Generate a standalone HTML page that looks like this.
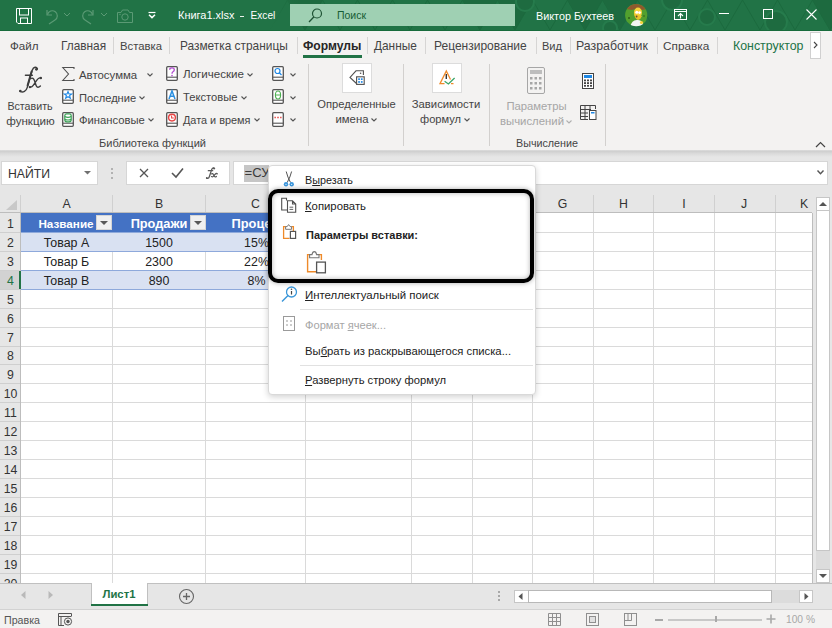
<!DOCTYPE html><html><head><meta charset="utf-8"><style>
html,body{margin:0;padding:0;}
body{width:832px;height:628px;overflow:hidden;position:relative;background:#fff;font-family:"Liberation Sans", sans-serif;}
.t{position:absolute;white-space:nowrap;}
svg{overflow:visible;}
</style></head><body><div style="position:absolute;left:0px;top:0px;width:832px;height:31px;background:#217346;"></div><div style="position:absolute;left:0px;top:30px;width:832px;height:1px;background:#176b3c;"></div><div style="position:absolute;left:0;top:0;width:832px;height:30px;overflow:hidden"><svg style="position:absolute;left:0px;top:0px;" width="832" height="30" viewBox="0 0 832 30"><path d="M270.0 30 L287.5 0 L305.0 30" fill="none" stroke="#1c6a3e" stroke-width="1"/><path d="M287.5 0 L305.0 30 L322.5 0 Z" fill="#1d6a3f"/><path d="M305.0 30 L322.5 0 L340.0 30" fill="none" stroke="#1c6a3e" stroke-width="1"/><path d="M340.0 30 L357.5 0 L375.0 30" fill="none" stroke="#1c6a3e" stroke-width="1"/><path d="M375.0 30 L392.5 0 L410.0 30" fill="none" stroke="#1c6a3e" stroke-width="1"/><path d="M410.0 30 L427.5 0 L445.0 30" fill="none" stroke="#1c6a3e" stroke-width="1"/><path d="M445.0 30 L462.5 0 L480.0 30" fill="none" stroke="#1c6a3e" stroke-width="1"/><path d="M462.5 0 L480.0 30 L497.5 0 Z" fill="#1d6a3f"/><path d="M480.0 30 L497.5 0 L515.0 30" fill="none" stroke="#1c6a3e" stroke-width="1"/><path d="M497.5 0 L515.0 30 L532.5 0 Z" fill="#1d6a3f"/><path d="M515.0 30 L532.5 0 L550.0 30" fill="none" stroke="#1c6a3e" stroke-width="1"/><path d="M550.0 30 L567.5 0 L585.0 30" fill="none" stroke="#1c6a3e" stroke-width="1"/><path d="M567.5 0 L585.0 30 L602.5 0 Z" fill="#1d6a3f"/><path d="M585.0 30 L602.5 0 L620.0 30" fill="none" stroke="#1c6a3e" stroke-width="1"/><path d="M602.5 0 L620.0 30 L637.5 0 Z" fill="#1d6a3f"/><path d="M620.0 30 L637.5 0 L655.0 30" fill="none" stroke="#1c6a3e" stroke-width="1"/><path d="M655.0 30 L672.5 0 L690.0 30" fill="none" stroke="#1c6a3e" stroke-width="1"/><path d="M690.0 30 L707.5 0 L725.0 30" fill="none" stroke="#1c6a3e" stroke-width="1"/><path d="M725.0 30 L742.5 0 L760.0 30" fill="none" stroke="#1c6a3e" stroke-width="1"/><path d="M760.0 30 L777.5 0 L795.0 30" fill="none" stroke="#1c6a3e" stroke-width="1"/><path d="M795.0 30 L812.5 0 L830.0 30" fill="none" stroke="#1c6a3e" stroke-width="1"/><path d="M812.5 0 L830.0 30 L847.5 0 Z" fill="#1d6a3f"/><path d="M830.0 30 L847.5 0 L865.0 30" fill="none" stroke="#1c6a3e" stroke-width="1"/><path d="M865.0 30 L882.5 0 L900.0 30" fill="none" stroke="#1c6a3e" stroke-width="1"/><circle cx="525" cy="2" r="9" fill="#1e6b40" stroke="#267b4c" stroke-width="2"/><circle cx="672" cy="0" r="10" fill="#1e6b40" stroke="#267b4c" stroke-width="2"/><circle cx="707" cy="17" r="8" fill="#1e6b40" stroke="#267b4c" stroke-width="2"/><circle cx="776" cy="22" r="11" fill="#1e6b40" stroke="#267b4c" stroke-width="2"/><circle cx="610" cy="28" r="7" fill="#1e6b40" stroke="#267b4c" stroke-width="2"/></svg></div><div style="position:absolute;left:0px;top:0px;width:300px;height:30px;background:linear-gradient(90deg,#217346 90%,rgba(33,115,70,0));"></div><svg style="position:absolute;left:16px;top:8px;" width="16" height="16" viewBox="0 0 16 16"><path d="M0.5 0.5 H15.5 V15.5 H2 L0.5 14 Z" fill="none" stroke="#fff" stroke-width="1"/><rect x="3.5" y="0.5" width="9" height="6.5" fill="none" stroke="#fff"/><rect x="4.5" y="10" width="7" height="5.5" fill="none" stroke="#fff"/></svg><svg style="position:absolute;left:44px;top:8px;" width="15" height="16" viewBox="0 0 15 16"><path d="M3 2 V7 H8" fill="none" stroke="#5b9a75" stroke-width="1.2"/><path d="M3.5 6.5 A5 5 0 1 1 11 12 L5 16" fill="none" stroke="#5b9a75" stroke-width="1.2"/></svg><svg style="position:absolute;left:63px;top:12px;" width="8" height="5" viewBox="0 0 8 5"><path d="M1 1 L4 4 L7 1" fill="none" stroke="#5b9a75" stroke-width="1"/></svg><svg style="position:absolute;left:81px;top:8px;" width="15" height="16" viewBox="0 0 15 16"><path d="M12 2 V7 H7" fill="none" stroke="#5b9a75" stroke-width="1.2"/><path d="M11.5 6.5 A5 5 0 1 0 4 12 L10 16" fill="none" stroke="#5b9a75" stroke-width="1.2"/></svg><svg style="position:absolute;left:100px;top:12px;" width="8" height="5" viewBox="0 0 8 5"><path d="M1 1 L4 4 L7 1" fill="none" stroke="#5b9a75" stroke-width="1"/></svg><svg style="position:absolute;left:117px;top:9px;" width="16" height="14" viewBox="0 0 16 14"><path d="M0.5 3.5 H4 L5.5 1 H11 L12.5 3.5 H15.5 V13.5 H0.5 Z" fill="none" stroke="#5b9a75" stroke-width="1"/><circle cx="8" cy="8" r="3.2" fill="none" stroke="#5b9a75"/><circle cx="3" cy="5.5" r="0.7" fill="#5b9a75"/></svg><svg style="position:absolute;left:147px;top:11px;" width="10" height="9" viewBox="0 0 10 9"><path d="M1.5 1.5 H8.5" stroke="#fff" stroke-width="1.2"/><path d="M2 3.8 L5 6.6 L8 3.8" fill="none" stroke="#fff" stroke-width="1.5"/></svg><div class="t" style="left:178px;top:7.50px;height:14px;line-height:14px;font-size:10.98px;color:#fff;font-weight:400;font-style:normal;">Книга1.xlsx</div><div style="position:absolute;left:239.5px;top:15.5px;width:4px;height:1px;background:#e8f0ea;"></div><div class="t" style="left:250.5px;top:8.80px;height:13px;line-height:13px;font-size:10.14px;color:#fff;font-weight:400;font-style:normal;">Excel</div><div style="position:absolute;left:290px;top:4px;width:225px;height:22px;background:#9fd0b3;"></div><svg style="position:absolute;left:308px;top:8px;" width="15" height="15" viewBox="0 0 15 15"><circle cx="9" cy="5.5" r="4.5" fill="none" stroke="#1e5234" stroke-width="1.2"/><path d="M6 8.8 L1 14" stroke="#1e5234" stroke-width="1.3"/></svg><div class="t" style="left:337px;top:8.50px;height:14px;line-height:14px;font-size:10.47px;color:#165c33;font-weight:400;font-style:normal;">Поиск</div><div class="t" style="left:536px;top:8.50px;height:14px;line-height:14px;font-size:10.80px;color:#fff;font-weight:400;font-style:normal;">Виктор Бухтеев</div><svg style="position:absolute;left:625px;top:4px;" width="23" height="23" viewBox="0 0 23 23"><defs><clipPath id="av"><circle cx="11.2" cy="11.2" r="11.1"/></clipPath></defs><g clip-path="url(#av)"><rect width="23" height="23" fill="#52a02e"/><circle cx="4" cy="14" r="1" fill="#2e5e1a"/><circle cx="19" cy="12" r="0.8" fill="#2e5e1a"/><path d="M1 5 Q6 -1 12 0 Q19 0 22 5 L17 6 Q12 3 7 6 Z" fill="#8f5a2e"/><ellipse cx="13" cy="8.6" rx="4" ry="5" fill="#f6d23a"/><path d="M9 10 Q10 15 13 16 Q16 15 17 12 Z" fill="#e9c12e"/><circle cx="11.8" cy="8.2" r="1.5" fill="#fff"/><circle cx="14.6" cy="8.6" r="1.4" fill="#fff"/><circle cx="11.6" cy="12.5" r="0.9" fill="#6b4a2a"/><path d="M5 23 Q7 15 13 16 Q18 16 19 23 Z" fill="#f4f4f4"/><circle cx="16.5" cy="18.5" r="1.6" fill="#f6d23a"/></g></svg><svg style="position:absolute;left:674px;top:9px;" width="13" height="11" viewBox="0 0 13 11"><rect x="0.5" y="0.5" width="12" height="10" fill="none" stroke="#fff"/><path d="M1 2.5 H12" stroke="#fff"/><path d="M6.5 9.5 V4.5 M4 7 L6.5 4.5 L9 7" fill="none" stroke="#fff" stroke-width="1.1"/></svg><div style="position:absolute;left:719px;top:13px;width:10px;height:1px;background:#fff;"></div><svg style="position:absolute;left:763px;top:9px;" width="10" height="10" viewBox="0 0 10 10"><rect x="0.5" y="0.5" width="9" height="9" fill="none" stroke="#fff"/></svg><svg style="position:absolute;left:806px;top:9px;" width="11" height="11" viewBox="0 0 11 11"><path d="M0.5 0.5 L10.5 10.5 M10.5 0.5 L0.5 10.5" stroke="#fff" stroke-width="1.1"/></svg><div style="position:absolute;left:0px;top:31px;width:832px;height:119px;background:#f3f2f1;"></div><div class="t" style="left:10px;top:37.50px;height:15px;line-height:15px;font-size:11.63px;color:#444;font-weight:400;font-style:normal;">Файл</div><div class="t" style="left:61px;top:38.50px;height:15px;line-height:15px;font-size:11.85px;color:#444;font-weight:400;font-style:normal;">Главная</div><div class="t" style="left:120px;top:38.50px;height:15px;line-height:15px;font-size:11.30px;color:#444;font-weight:400;font-style:normal;">Вставка</div><div class="t" style="left:180px;top:38.50px;height:15px;line-height:15px;font-size:11.88px;color:#444;font-weight:400;font-style:normal;">Разметка страницы</div><div class="t" style="left:303px;top:38.00px;height:16px;line-height:16px;font-size:12.12px;color:#262626;font-weight:700;font-style:normal;">Формулы</div><div class="t" style="left:374px;top:38.50px;height:15px;line-height:15px;font-size:11.85px;color:#444;font-weight:400;font-style:normal;">Данные</div><div class="t" style="left:434px;top:38.00px;height:16px;line-height:16px;font-size:12.00px;color:#444;font-weight:400;font-style:normal;">Рецензирование</div><div class="t" style="left:542px;top:39.00px;height:14px;line-height:14px;font-size:11.06px;color:#444;font-weight:400;font-style:normal;">Вид</div><div class="t" style="left:576px;top:38.00px;height:16px;line-height:16px;font-size:12.33px;color:#444;font-weight:400;font-style:normal;">Разработчик</div><div class="t" style="left:663px;top:38.50px;height:15px;line-height:15px;font-size:11.80px;color:#444;font-weight:400;font-style:normal;">Справка</div><div class="t" style="left:733px;top:38.00px;height:16px;line-height:16px;font-size:12.37px;color:#217346;font-weight:400;font-style:normal;">Конструктор</div><div style="position:absolute;left:113px;top:37px;width:1px;height:17px;background:#d6d5d4;"></div><div style="position:absolute;left:169px;top:37px;width:1px;height:17px;background:#d6d5d4;"></div><div style="position:absolute;left:297px;top:37px;width:1px;height:17px;background:#d6d5d4;"></div><div style="position:absolute;left:367px;top:37px;width:1px;height:17px;background:#d6d5d4;"></div><div style="position:absolute;left:425px;top:37px;width:1px;height:17px;background:#d6d5d4;"></div><div style="position:absolute;left:536px;top:37px;width:1px;height:17px;background:#d6d5d4;"></div><div style="position:absolute;left:570px;top:37px;width:1px;height:17px;background:#d6d5d4;"></div><div style="position:absolute;left:657px;top:37px;width:1px;height:17px;background:#d6d5d4;"></div><div style="position:absolute;left:717px;top:37px;width:1px;height:17px;background:#d6d5d4;"></div><div style="position:absolute;left:303px;top:55px;width:59px;height:3px;background:#217346;"></div><div style="position:absolute;left:810px;top:32px;width:11px;height:27px;background:#fff;border:1px solid #d0d0d0;box-sizing:border-box;"></div><svg style="position:absolute;left:812px;top:41px;" width="7" height="8" viewBox="0 0 7 8"><path d="M2 1 L5 4 L2 7" fill="none" stroke="#444" stroke-width="1.1"/></svg><svg style="position:absolute;left:0;top:0;" width="832" height="628" viewBox="0 0 832 628"><path d="M37.4 68.8 C36.6 66.6 33.6 66.4 32.2 70.2 L27.2 87.6 C26.2 91.2 23 92.6 20.6 91.6 M25.4 75.2 H32.4 M30.6 78.6 C32.4 77.4 33.8 78.6 34.6 81 L36.1 85.4 C36.8 87.6 38.6 87.8 40.4 86 M41 78.2 C39.4 77.2 37.8 78.6 35.8 81.6 L33.2 85.4 C32.2 86.8 31 87.4 30 86.9" fill="none" stroke="#3c3c3c" stroke-width="1.4" stroke-linecap="round" vector-effect="non-scaling-stroke"/><circle cx="36.4" cy="69.3" r="1.35" fill="#3c3c3c"/><circle cx="20.3" cy="91" r="1.35" fill="#3c3c3c"/><circle cx="40.8" cy="78" r="1.2" fill="#3c3c3c"/><circle cx="29.9" cy="87.1" r="1.2" fill="#3c3c3c"/><path d="M31.6 71.5 L27.6 85.5" stroke="#3c3c3c" stroke-width="2" stroke-linecap="round"/></svg><div class="t" style="left:-120px;width:300px;text-align:center;top:99.00px;height:14px;line-height:14px;font-size:10.67px;color:#444;font-weight:400;font-style:normal;">Вставить</div><div class="t" style="left:-119.5px;width:300px;text-align:center;top:113.00px;height:15px;line-height:15px;font-size:11.62px;color:#444;font-weight:400;font-style:normal;">функцию</div><svg style="position:absolute;left:62px;top:67px;" width="13" height="14" viewBox="0 0 13 14"><path d="M12 2 V0.5 H0.8 L6.5 7 L0.8 13.5 H12 V12" fill="none" stroke="#505050" stroke-width="1.1"/></svg><div class="t" style="left:79px;top:67.50px;height:15px;line-height:15px;font-size:11.42px;color:#444;font-weight:400;font-style:normal;">Автосумма</div><svg style="position:absolute;left:147px;top:73px;" width="6" height="4" viewBox="0 0 6 4"><path d="M0.5 0.5 L3 3 L5.5 0.5" fill="none" stroke="#555" stroke-width="1.1"/></svg><svg style="position:absolute;left:62px;top:89px;" width="12" height="15" viewBox="0 0 12 15"><rect x="0.7" y="0.7" width="10.6" height="13.6" rx="1" fill="#fff" stroke="#555" stroke-width="1.3"/><path d="M0.7 11.2 H11.3" stroke="#555" stroke-width="1.1"/><path d="M6 2.5 L7 5 H9.7 L7.6 6.6 L8.4 9.3 L6 7.7 L3.6 9.3 L4.4 6.6 L2.3 5 H5 Z" fill="none" stroke="#1e88e5" stroke-width="1.1"/></svg><div class="t" style="left:79px;top:90.50px;height:14px;line-height:14px;font-size:11.12px;color:#444;font-weight:400;font-style:normal;">Последние</div><svg style="position:absolute;left:139px;top:95.5px;" width="6" height="4" viewBox="0 0 6 4"><path d="M0.5 0.5 L3 3 L5.5 0.5" fill="none" stroke="#555" stroke-width="1.1"/></svg><svg style="position:absolute;left:62px;top:112px;" width="12" height="15" viewBox="0 0 12 15"><rect x="0.7" y="0.7" width="10.6" height="13.6" rx="1" fill="#fff" stroke="#555" stroke-width="1.3"/><path d="M0.7 11.2 H11.3" stroke="#555" stroke-width="1.1"/><rect x="2.8" y="1.8" width="6.4" height="8" rx="2" fill="none" stroke="#3aa055" stroke-width="1.2"/><path d="M2.8 4.6 Q6 6.2 9.2 4.6 M2.8 7.2 Q6 8.8 9.2 7.2" fill="none" stroke="#3aa055" stroke-width="1.1"/></svg><div class="t" style="left:79px;top:112.50px;height:15px;line-height:15px;font-size:11.24px;color:#444;font-weight:400;font-style:normal;">Финансовые</div><svg style="position:absolute;left:148px;top:118px;" width="6" height="4" viewBox="0 0 6 4"><path d="M0.5 0.5 L3 3 L5.5 0.5" fill="none" stroke="#555" stroke-width="1.1"/></svg><svg style="position:absolute;left:166px;top:66px;" width="12" height="15" viewBox="0 0 12 15"><rect x="0.7" y="0.7" width="10.6" height="13.6" rx="1" fill="#fff" stroke="#555" stroke-width="1.3"/><path d="M0.7 11.2 H11.3" stroke="#555" stroke-width="1.1"/><path d="M3.7 3.8 Q3.7 1.8 6 1.8 Q8.3 1.8 8.3 3.8 Q8.3 5 7 5.8 Q6 6.5 6 7.8" fill="none" stroke="#b04ad0" stroke-width="1.3"/><circle cx="6" cy="9.6" r="0.8" fill="#b04ad0"/></svg><div class="t" style="left:183px;top:67.00px;height:15px;line-height:15px;font-size:11.59px;color:#444;font-weight:400;font-style:normal;">Логические</div><svg style="position:absolute;left:247px;top:73px;" width="6" height="4" viewBox="0 0 6 4"><path d="M0.5 0.5 L3 3 L5.5 0.5" fill="none" stroke="#555" stroke-width="1.1"/></svg><svg style="position:absolute;left:166px;top:89px;" width="12" height="15" viewBox="0 0 12 15"><rect x="0.7" y="0.7" width="10.6" height="13.6" rx="1" fill="#fff" stroke="#555" stroke-width="1.3"/><path d="M0.7 11.2 H11.3" stroke="#555" stroke-width="1.1"/><path d="M3 10 L6 2 L9 10 M4.1 7.3 H7.9" fill="none" stroke="#2b8fe0" stroke-width="1.5"/></svg><div class="t" style="left:183px;top:90.00px;height:15px;line-height:15px;font-size:11.19px;color:#444;font-weight:400;font-style:normal;">Текстовые</div><svg style="position:absolute;left:240.5px;top:95.5px;" width="6" height="4" viewBox="0 0 6 4"><path d="M0.5 0.5 L3 3 L5.5 0.5" fill="none" stroke="#555" stroke-width="1.1"/></svg><svg style="position:absolute;left:166px;top:112px;" width="12" height="15" viewBox="0 0 12 15"><rect x="0.7" y="0.7" width="10.6" height="13.6" rx="1" fill="#fff" stroke="#555" stroke-width="1.3"/><path d="M0.7 11.2 H11.3" stroke="#555" stroke-width="1.1"/><circle cx="6" cy="5.6" r="3.4" fill="none" stroke="#e84545" stroke-width="1.4"/><path d="M5.6 3.6 V6 H7.8" fill="none" stroke="#e84545" stroke-width="1.1"/></svg><div class="t" style="left:183px;top:113.00px;height:14px;line-height:14px;font-size:10.87px;color:#444;font-weight:400;font-style:normal;">Дата и время</div><svg style="position:absolute;left:253.5px;top:118px;" width="6" height="4" viewBox="0 0 6 4"><path d="M0.5 0.5 L3 3 L5.5 0.5" fill="none" stroke="#555" stroke-width="1.1"/></svg><svg style="position:absolute;left:272px;top:66px;" width="12" height="15" viewBox="0 0 12 15"><rect x="0.7" y="0.7" width="10.6" height="13.6" rx="1" fill="#fff" stroke="#555" stroke-width="1.3"/><path d="M0.7 11.2 H11.3" stroke="#555" stroke-width="1.1"/><circle cx="5.5" cy="5" r="2.5" fill="none" stroke="#1e88e5" stroke-width="1.2"/><path d="M7.3 6.8 L9.5 9" stroke="#1e88e5" stroke-width="1.3"/></svg><svg style="position:absolute;left:289.5px;top:73px;" width="6" height="4" viewBox="0 0 6 4"><path d="M0.5 0.5 L3 3 L5.5 0.5" fill="none" stroke="#555" stroke-width="1.1"/></svg><svg style="position:absolute;left:272px;top:89px;" width="12" height="15" viewBox="0 0 12 15"><rect x="0.7" y="0.7" width="10.6" height="13.6" rx="1" fill="#fff" stroke="#555" stroke-width="1.3"/><path d="M0.7 11.2 H11.3" stroke="#555" stroke-width="1.1"/><ellipse cx="6" cy="6" rx="2.6" ry="4" fill="none" stroke="#4caf50" stroke-width="1.1"/><path d="M3.4 6 H8.6" stroke="#4caf50" stroke-width="1"/></svg><svg style="position:absolute;left:289.5px;top:95.5px;" width="6" height="4" viewBox="0 0 6 4"><path d="M0.5 0.5 L3 3 L5.5 0.5" fill="none" stroke="#555" stroke-width="1.1"/></svg><svg style="position:absolute;left:272px;top:112px;" width="12" height="15" viewBox="0 0 12 15"><rect x="0.7" y="0.7" width="10.6" height="13.6" rx="1" fill="#fff" stroke="#555" stroke-width="1.3"/><path d="M0.7 11.2 H11.3" stroke="#555" stroke-width="1.1"/><path d="M2.5 5.5 H3.8 M5.3 5.5 H6.7 M8.2 5.5 H9.5" stroke="#e53935" stroke-width="1.3"/></svg><svg style="position:absolute;left:289.5px;top:118px;" width="6" height="4" viewBox="0 0 6 4"><path d="M0.5 0.5 L3 3 L5.5 0.5" fill="none" stroke="#555" stroke-width="1.1"/></svg><div class="t" style="left:2.5px;width:300px;text-align:center;top:135.60px;height:14px;line-height:14px;font-size:11.03px;color:#444;font-weight:400;font-style:normal;">Библиотека функций</div><div style="position:absolute;left:308px;top:64px;width:1px;height:82px;background:#d2d0ce;"></div><div style="position:absolute;left:342px;top:63px;width:30px;height:30px;background:#fff;border:1px solid #dcdcdc;box-sizing:border-box;"></div><svg style="position:absolute;left:0;top:0;" width="832" height="628" viewBox="0 0 832 628"><path d="M357 84 L350 77.4 L356 70.8 H363.4 V75" fill="none" stroke="#505050" stroke-width="1.1"/><circle cx="360.6" cy="73.3" r="0.8" fill="#505050"/><rect x="356.6" y="76.8" width="7.6" height="7.6" fill="#fff" stroke="#505050" stroke-width="1.1"/><rect x="358.2" y="78.3" width="1.7" height="1.7" fill="#1e88e5"/><rect x="360.9" y="78.3" width="1.7" height="1.7" fill="#1e88e5"/><rect x="358.2" y="81.1" width="1.7" height="1.7" fill="#1e88e5"/><rect x="360.9" y="81.1" width="1.7" height="1.7" fill="#1e88e5"/></svg><div class="t" style="left:206.5px;width:300px;text-align:center;top:97.00px;height:14px;line-height:14px;font-size:11.15px;color:#444;font-weight:400;font-style:normal;">Определенные</div><div class="t" style="left:202px;width:300px;text-align:center;top:111.80px;height:15px;line-height:15px;font-size:11.34px;color:#444;font-weight:400;font-style:normal;">имена</div><svg style="position:absolute;left:371px;top:117.5px;" width="6" height="4" viewBox="0 0 6 4"><path d="M0.5 0.5 L3 3 L5.5 0.5" fill="none" stroke="#555" stroke-width="1.1"/></svg><div style="position:absolute;left:403px;top:64px;width:1px;height:82px;background:#d2d0ce;"></div><div style="position:absolute;left:432px;top:63px;width:30px;height:30px;background:#fff;border:1px solid #dcdcdc;box-sizing:border-box;"></div><svg style="position:absolute;left:0;top:0;" width="832" height="628" viewBox="0 0 832 628"><path d="M444.5 83.6 H440 L446.3 71 L450.5 79.5" fill="none" stroke="#ee8a2a" stroke-width="1.3"/><path d="M446.3 74 V79" stroke="#333" stroke-width="1.4"/><path d="M444.6 81.3 L448.4 84 L454.6 78" fill="none" stroke="#3aa569" stroke-width="1.3"/><path d="M451 83.6 H453.5" stroke="#ee8a2a" stroke-width="1.3"/></svg><div class="t" style="left:296px;width:300px;text-align:center;top:96.50px;height:15px;line-height:15px;font-size:11.29px;color:#444;font-weight:400;font-style:normal;">Зависимости</div><div class="t" style="left:290.5px;width:300px;text-align:center;top:112.30px;height:14px;line-height:14px;font-size:11.10px;color:#444;font-weight:400;font-style:normal;">формул</div><svg style="position:absolute;left:463.5px;top:117.5px;" width="6" height="4" viewBox="0 0 6 4"><path d="M0.5 0.5 L3 3 L5.5 0.5" fill="none" stroke="#555" stroke-width="1.1"/></svg><div style="position:absolute;left:489px;top:64px;width:1px;height:82px;background:#d2d0ce;"></div><svg style="position:absolute;left:527px;top:67px;" width="19" height="27" viewBox="0 0 19 27"><rect x="0.5" y="0.5" width="17" height="26" rx="1.5" fill="none" stroke="#a6a6a6" stroke-width="1"/><rect x="3" y="3" width="12" height="4" fill="#bdbdbd"/><rect x="3.0" y="10" width="2.5" height="2.5" fill="#a6a6a6"/><rect x="3.0" y="15" width="2.5" height="2.5" fill="#a6a6a6"/><rect x="3.0" y="20" width="2.5" height="2.5" fill="#a6a6a6"/><rect x="7.5" y="10" width="2.5" height="2.5" fill="#a6a6a6"/><rect x="7.5" y="15" width="2.5" height="2.5" fill="#a6a6a6"/><rect x="7.5" y="20" width="2.5" height="2.5" fill="#a6a6a6"/><rect x="12.0" y="10" width="2.5" height="2.5" fill="#a6a6a6"/><rect x="12.0" y="15" width="2.5" height="2.5" fill="#a6a6a6"/><rect x="12.0" y="20" width="2.5" height="2.5" fill="#a6a6a6"/></svg><div class="t" style="left:386.5px;width:300px;text-align:center;top:98.50px;height:15px;line-height:15px;font-size:11.28px;color:#a6a6a6;font-weight:400;font-style:normal;">Параметры</div><div class="t" style="left:382px;width:300px;text-align:center;top:113.50px;height:15px;line-height:15px;font-size:11.35px;color:#a6a6a6;font-weight:400;font-style:normal;">вычислений</div><svg style="position:absolute;left:566px;top:119.5px;" width="6" height="4" viewBox="0 0 6 4"><path d="M0.5 0.5 L3 3 L5.5 0.5" fill="none" stroke="#b0b0b0" stroke-width="1.1"/></svg><svg style="position:absolute;left:582px;top:73px;" width="12" height="16" viewBox="0 0 12 16"><rect x="0.5" y="0.5" width="11" height="15" fill="#fff" stroke="#444"/><rect x="2" y="2" width="8" height="3" fill="#1e88e5"/><rect x="2" y="6.5" width="2" height="1.8" fill="#444"/><rect x="2" y="9.2" width="2" height="1.8" fill="#444"/><rect x="2" y="11.9" width="2" height="1.8" fill="#444"/><rect x="5" y="6.5" width="2" height="1.8" fill="#444"/><rect x="5" y="9.2" width="2" height="1.8" fill="#444"/><rect x="5" y="11.9" width="2" height="1.8" fill="#444"/><rect x="8" y="6.5" width="2" height="1.8" fill="#444"/><rect x="8" y="9.2" width="2" height="1.8" fill="#444"/><rect x="8" y="11.9" width="2" height="1.8" fill="#444"/></svg><svg style="position:absolute;left:580px;top:105px;" width="17" height="15" viewBox="0 0 17 15"><path d="M0.5 0.5 H15.5 V4 M0.5 0.5 V14.5 H8 M0.5 4.5 H11 M0.5 8 H8 M0.5 11.5 H8 M5 0.5 V14.5 M10 0.5 V4.5" fill="none" stroke="#444" stroke-width="1"/><rect x="9.5" y="5.5" width="6.5" height="9" fill="#fff" stroke="#444"/><rect x="11" y="7" width="3.5" height="1.5" fill="#1e88e5"/></svg><div class="t" style="left:397px;width:300px;text-align:center;top:135.60px;height:14px;line-height:14px;font-size:10.74px;color:#444;font-weight:400;font-style:normal;">Вычисление</div><div style="position:absolute;left:605px;top:64px;width:1px;height:82px;background:#d2d0ce;"></div><svg style="position:absolute;left:815px;top:141px;" width="11" height="7" viewBox="0 0 11 7"><path d="M1 6 L5.5 1.5 L10 6" fill="none" stroke="#444" stroke-width="1.2"/></svg><div style="position:absolute;left:0px;top:150px;width:832px;height:7px;background:linear-gradient(#dcdcdc 0%,#d0d0d0 22%,#dadada 50%,#e6e6e6 100%);"></div><div style="position:absolute;left:0px;top:157px;width:832px;height:56px;background:#e6e6e6;"></div><div style="position:absolute;left:1px;top:161px;width:97px;height:24px;background:#fff;border:1px solid #d6d6d6;box-sizing:border-box;"></div><div class="t" style="left:8px;top:165.80px;height:16px;line-height:16px;font-size:12.22px;color:#333;font-weight:400;font-style:normal;">НАЙТИ</div><svg style="position:absolute;left:84px;top:170.5px;" width="7" height="4" viewBox="0 0 7 4"><path d="M0 0 H7 L3.5 3.5 Z" fill="#707070"/></svg><div style="position:absolute;left:111px;top:168px;width:2px;height:2px;background:#a0a0a0;border-radius:1px;"></div><div style="position:absolute;left:111px;top:172.3px;width:2px;height:2px;background:#a0a0a0;border-radius:1px;"></div><div style="position:absolute;left:111px;top:176.6px;width:2px;height:2px;background:#a0a0a0;border-radius:1px;"></div><div style="position:absolute;left:126px;top:161px;width:104px;height:24px;background:#fff;border:1px solid #d6d6d6;box-sizing:border-box;"></div><svg style="position:absolute;left:139px;top:168px;" width="10" height="10" viewBox="0 0 10 10"><path d="M1 1 L9 9 M9 1 L1 9" stroke="#555" stroke-width="1.3"/></svg><svg style="position:absolute;left:171px;top:167px;" width="13" height="11" viewBox="0 0 13 11"><path d="M1 6 L5 10 L12 1.5" fill="none" stroke="#555" stroke-width="1.6"/></svg><svg style="position:absolute;left:0;top:0;" width="832" height="628" viewBox="0 0 832 628"><path d="M214.6 168.6 C214 167.4 212.4 167.4 211.7 169.5 L209.3 176.8 C208.8 178.3 207.6 178.8 206.7 178.2 M208.3 170.7 H212.7 M211.5 173.9 C212.3 173.2 213 173.6 213.4 174.5 L214.2 176.1 C214.6 177 215.5 177.1 216.4 176.4 M217.3 173.8 C216.5 173.1 215.8 173.5 215 174.4 L213.3 176.3 C212.8 176.9 212.1 177 211.5 176.6" fill="none" stroke="#5a5a5a" stroke-width="1.25" stroke-linecap="round"/><circle cx="213.9" cy="168.4" r="0.9" fill="#5a5a5a"/><circle cx="206.8" cy="178" r="0.9" fill="#5a5a5a"/></svg><div style="position:absolute;left:233px;top:161px;width:595px;height:24px;background:#fff;border:1px solid #d6d6d6;box-sizing:border-box;"></div><div style="position:absolute;left:244px;top:164.5px;width:25px;height:17.5px;background:#c6c6c6;"></div><div class="t" style="left:244.5px;top:164.00px;height:17px;line-height:17px;font-size:13.10px;color:#3a3a3a;font-weight:400;font-style:normal;">=СУ</div><svg style="position:absolute;left:817px;top:170px;" width="7" height="5" viewBox="0 0 7 5"><path d="M0.5 0.5 L3.5 3.8 L6.5 0.5" fill="none" stroke="#555" stroke-width="1.4"/></svg><div style="position:absolute;left:0px;top:213px;width:812px;height:370px;background:#fff;"></div><svg style="position:absolute;left:6px;top:200px;" width="11" height="10" viewBox="0 0 11 10"><path d="M11 0 V10 H0 Z" fill="#c8c8c8"/></svg><div style="position:absolute;left:20px;top:195px;width:1px;height:18px;background:#d0d0d0;"></div><div class="t" style="left:-83.5px;width:300px;text-align:center;top:196.00px;height:16px;line-height:16px;font-size:12.30px;color:#333;font-weight:400;font-style:normal;">A</div><div style="position:absolute;left:112px;top:195px;width:1px;height:18px;background:#d0d0d0;"></div><div class="t" style="left:9.0px;width:300px;text-align:center;top:196.00px;height:16px;line-height:16px;font-size:12.30px;color:#333;font-weight:400;font-style:normal;">B</div><div style="position:absolute;left:205px;top:195px;width:1px;height:18px;background:#d0d0d0;"></div><div class="t" style="left:105.5px;width:300px;text-align:center;top:196.00px;height:16px;line-height:16px;font-size:12.30px;color:#333;font-weight:400;font-style:normal;">C</div><div style="position:absolute;left:305px;top:195px;width:1px;height:18px;background:#d0d0d0;"></div><div class="t" style="left:208.5px;width:300px;text-align:center;top:196.00px;height:16px;line-height:16px;font-size:12.30px;color:#333;font-weight:400;font-style:normal;">D</div><div style="position:absolute;left:411px;top:195px;width:1px;height:18px;background:#d0d0d0;"></div><div class="t" style="left:292.0px;width:300px;text-align:center;top:196.00px;height:16px;line-height:16px;font-size:12.30px;color:#333;font-weight:400;font-style:normal;">E</div><div style="position:absolute;left:472px;top:195px;width:1px;height:18px;background:#d0d0d0;"></div><div class="t" style="left:352.5px;width:300px;text-align:center;top:196.00px;height:16px;line-height:16px;font-size:12.30px;color:#333;font-weight:400;font-style:normal;">F</div><div style="position:absolute;left:532px;top:195px;width:1px;height:18px;background:#d0d0d0;"></div><div class="t" style="left:412.5px;width:300px;text-align:center;top:196.00px;height:16px;line-height:16px;font-size:12.30px;color:#333;font-weight:400;font-style:normal;">G</div><div style="position:absolute;left:593px;top:195px;width:1px;height:18px;background:#d0d0d0;"></div><div class="t" style="left:473.5px;width:300px;text-align:center;top:196.00px;height:16px;line-height:16px;font-size:12.30px;color:#333;font-weight:400;font-style:normal;">H</div><div style="position:absolute;left:653px;top:195px;width:1px;height:18px;background:#d0d0d0;"></div><div class="t" style="left:534.0px;width:300px;text-align:center;top:196.00px;height:16px;line-height:16px;font-size:12.30px;color:#333;font-weight:400;font-style:normal;">I</div><div style="position:absolute;left:714px;top:195px;width:1px;height:18px;background:#d0d0d0;"></div><div class="t" style="left:594.2px;width:300px;text-align:center;top:196.00px;height:16px;line-height:16px;font-size:12.30px;color:#333;font-weight:400;font-style:normal;">J</div><div style="position:absolute;left:775px;top:195px;width:1px;height:18px;background:#d0d0d0;"></div><div class="t" style="left:654.0px;width:300px;text-align:center;top:196.00px;height:16px;line-height:16px;font-size:12.30px;color:#333;font-weight:400;font-style:normal;">K</div><div style="position:absolute;left:0px;top:212px;width:812px;height:1px;background:#bdbdbd;"></div><div style="position:absolute;left:0px;top:213px;width:20px;height:370px;background:#e6e6e6;"></div><div style="position:absolute;left:20px;top:213px;width:1px;height:370px;background:#bdbdbd;"></div><div style="position:absolute;left:0px;top:232px;width:20px;height:1px;background:#cfcfcf;"></div><div style="position:absolute;left:21px;top:232px;width:791px;height:1px;background:#dadada;"></div><div style="position:absolute;left:0px;top:251px;width:20px;height:1px;background:#cfcfcf;"></div><div style="position:absolute;left:21px;top:251px;width:791px;height:1px;background:#dadada;"></div><div style="position:absolute;left:0px;top:270px;width:20px;height:1px;background:#cfcfcf;"></div><div style="position:absolute;left:21px;top:270px;width:791px;height:1px;background:#dadada;"></div><div style="position:absolute;left:0px;top:289px;width:20px;height:1px;background:#cfcfcf;"></div><div style="position:absolute;left:21px;top:289px;width:791px;height:1px;background:#dadada;"></div><div style="position:absolute;left:0px;top:308px;width:20px;height:1px;background:#cfcfcf;"></div><div style="position:absolute;left:21px;top:308px;width:791px;height:1px;background:#dadada;"></div><div style="position:absolute;left:0px;top:327px;width:20px;height:1px;background:#cfcfcf;"></div><div style="position:absolute;left:21px;top:327px;width:791px;height:1px;background:#dadada;"></div><div style="position:absolute;left:0px;top:346px;width:20px;height:1px;background:#cfcfcf;"></div><div style="position:absolute;left:21px;top:346px;width:791px;height:1px;background:#dadada;"></div><div style="position:absolute;left:0px;top:364px;width:20px;height:1px;background:#cfcfcf;"></div><div style="position:absolute;left:21px;top:364px;width:791px;height:1px;background:#dadada;"></div><div style="position:absolute;left:0px;top:383px;width:20px;height:1px;background:#cfcfcf;"></div><div style="position:absolute;left:21px;top:383px;width:791px;height:1px;background:#dadada;"></div><div style="position:absolute;left:0px;top:402px;width:20px;height:1px;background:#cfcfcf;"></div><div style="position:absolute;left:21px;top:402px;width:791px;height:1px;background:#dadada;"></div><div style="position:absolute;left:0px;top:421px;width:20px;height:1px;background:#cfcfcf;"></div><div style="position:absolute;left:21px;top:421px;width:791px;height:1px;background:#dadada;"></div><div style="position:absolute;left:0px;top:440px;width:20px;height:1px;background:#cfcfcf;"></div><div style="position:absolute;left:21px;top:440px;width:791px;height:1px;background:#dadada;"></div><div style="position:absolute;left:0px;top:459px;width:20px;height:1px;background:#cfcfcf;"></div><div style="position:absolute;left:21px;top:459px;width:791px;height:1px;background:#dadada;"></div><div style="position:absolute;left:0px;top:478px;width:20px;height:1px;background:#cfcfcf;"></div><div style="position:absolute;left:21px;top:478px;width:791px;height:1px;background:#dadada;"></div><div style="position:absolute;left:0px;top:497px;width:20px;height:1px;background:#cfcfcf;"></div><div style="position:absolute;left:21px;top:497px;width:791px;height:1px;background:#dadada;"></div><div style="position:absolute;left:0px;top:516px;width:20px;height:1px;background:#cfcfcf;"></div><div style="position:absolute;left:21px;top:516px;width:791px;height:1px;background:#dadada;"></div><div style="position:absolute;left:0px;top:535px;width:20px;height:1px;background:#cfcfcf;"></div><div style="position:absolute;left:21px;top:535px;width:791px;height:1px;background:#dadada;"></div><div style="position:absolute;left:0px;top:554px;width:20px;height:1px;background:#cfcfcf;"></div><div style="position:absolute;left:21px;top:554px;width:791px;height:1px;background:#dadada;"></div><div style="position:absolute;left:0px;top:573px;width:20px;height:1px;background:#cfcfcf;"></div><div style="position:absolute;left:21px;top:573px;width:791px;height:1px;background:#dadada;"></div><div style="position:absolute;left:112px;top:213px;width:1px;height:370px;background:#dadada;"></div><div style="position:absolute;left:205px;top:213px;width:1px;height:370px;background:#dadada;"></div><div style="position:absolute;left:305px;top:213px;width:1px;height:370px;background:#dadada;"></div><div style="position:absolute;left:411px;top:213px;width:1px;height:370px;background:#dadada;"></div><div style="position:absolute;left:472px;top:213px;width:1px;height:370px;background:#dadada;"></div><div style="position:absolute;left:532px;top:213px;width:1px;height:370px;background:#dadada;"></div><div style="position:absolute;left:593px;top:213px;width:1px;height:370px;background:#dadada;"></div><div style="position:absolute;left:653px;top:213px;width:1px;height:370px;background:#dadada;"></div><div style="position:absolute;left:714px;top:213px;width:1px;height:370px;background:#dadada;"></div><div style="position:absolute;left:775px;top:213px;width:1px;height:370px;background:#dadada;"></div><div style="position:absolute;left:812px;top:213px;width:1px;height:370px;background:#bdbdbd;"></div><div style="position:absolute;left:0px;top:271px;width:20px;height:18px;background:#d2d2d2;"></div><div class="t" style="left:-139.5px;width:300px;text-align:center;top:215.70px;height:16px;line-height:16px;font-size:12.30px;color:#333;font-weight:400;font-style:normal;">1</div><div class="t" style="left:-139.5px;width:300px;text-align:center;top:234.70px;height:16px;line-height:16px;font-size:12.30px;color:#333;font-weight:400;font-style:normal;">2</div><div class="t" style="left:-139.5px;width:300px;text-align:center;top:253.70px;height:16px;line-height:16px;font-size:12.30px;color:#333;font-weight:400;font-style:normal;">3</div><div class="t" style="left:-139.5px;width:300px;text-align:center;top:272.70px;height:16px;line-height:16px;font-size:12.30px;color:#217346;font-weight:400;font-style:normal;">4</div><div class="t" style="left:-139.5px;width:300px;text-align:center;top:291.70px;height:16px;line-height:16px;font-size:12.30px;color:#333;font-weight:400;font-style:normal;">5</div><div class="t" style="left:-139.5px;width:300px;text-align:center;top:310.70px;height:16px;line-height:16px;font-size:12.30px;color:#333;font-weight:400;font-style:normal;">6</div><div class="t" style="left:-139.5px;width:300px;text-align:center;top:329.70px;height:16px;line-height:16px;font-size:12.30px;color:#333;font-weight:400;font-style:normal;">7</div><div class="t" style="left:-139.5px;width:300px;text-align:center;top:348.20px;height:16px;line-height:16px;font-size:12.30px;color:#333;font-weight:400;font-style:normal;">8</div><div class="t" style="left:-139.5px;width:300px;text-align:center;top:366.70px;height:16px;line-height:16px;font-size:12.30px;color:#333;font-weight:400;font-style:normal;">9</div><div class="t" style="left:-139.5px;width:300px;text-align:center;top:385.70px;height:16px;line-height:16px;font-size:12.30px;color:#333;font-weight:400;font-style:normal;">10</div><div class="t" style="left:-139.5px;width:300px;text-align:center;top:404.70px;height:16px;line-height:16px;font-size:12.30px;color:#333;font-weight:400;font-style:normal;">11</div><div class="t" style="left:-139.5px;width:300px;text-align:center;top:423.70px;height:16px;line-height:16px;font-size:12.30px;color:#333;font-weight:400;font-style:normal;">12</div><div class="t" style="left:-139.5px;width:300px;text-align:center;top:442.70px;height:16px;line-height:16px;font-size:12.30px;color:#333;font-weight:400;font-style:normal;">13</div><div class="t" style="left:-139.5px;width:300px;text-align:center;top:461.70px;height:16px;line-height:16px;font-size:12.30px;color:#333;font-weight:400;font-style:normal;">14</div><div class="t" style="left:-139.5px;width:300px;text-align:center;top:480.70px;height:16px;line-height:16px;font-size:12.30px;color:#333;font-weight:400;font-style:normal;">15</div><div class="t" style="left:-139.5px;width:300px;text-align:center;top:499.70px;height:16px;line-height:16px;font-size:12.30px;color:#333;font-weight:400;font-style:normal;">16</div><div class="t" style="left:-139.5px;width:300px;text-align:center;top:518.70px;height:16px;line-height:16px;font-size:12.30px;color:#333;font-weight:400;font-style:normal;">17</div><div class="t" style="left:-139.5px;width:300px;text-align:center;top:537.70px;height:16px;line-height:16px;font-size:12.30px;color:#333;font-weight:400;font-style:normal;">18</div><div class="t" style="left:-139.5px;width:300px;text-align:center;top:556.70px;height:16px;line-height:16px;font-size:12.30px;color:#333;font-weight:400;font-style:normal;">19</div><div class="t" style="left:-139.5px;width:300px;text-align:center;top:575.70px;height:16px;line-height:16px;font-size:12.30px;color:#333;font-weight:400;font-style:normal;">20</div><div style="position:absolute;left:21px;top:213px;width:285px;height:19px;background:#4472c4;"></div><div style="position:absolute;left:21px;top:232px;width:285px;height:19px;background:#d9e1f2;"></div><div style="position:absolute;left:21px;top:270px;width:285px;height:19px;background:#d9e1f2;"></div><div style="position:absolute;left:21px;top:232px;width:285px;height:1px;background:#8ea9db;"></div><div style="position:absolute;left:21px;top:251px;width:285px;height:1px;background:#8ea9db;"></div><div style="position:absolute;left:21px;top:270px;width:285px;height:1px;background:#8ea9db;"></div><div style="position:absolute;left:21px;top:289px;width:285px;height:1px;background:#8ea9db;"></div><div class="t" style="left:-84px;width:300px;text-align:center;top:216.10px;height:15px;line-height:15px;font-size:11.69px;color:#fff;font-weight:700;font-style:normal;">Название</div><div style="position:absolute;left:96px;top:215px;width:16px;height:15px;background:#f0f0f0;border:1px solid #d5d5d5;box-sizing:border-box;"></div><svg style="position:absolute;left:100px;top:221px;" width="8" height="4" viewBox="0 0 8 4"><path d="M0 0 H8 L4 4 Z" fill="#595959"/></svg><div class="t" style="left:9px;width:300px;text-align:center;top:215.10px;height:17px;line-height:17px;font-size:12.78px;color:#fff;font-weight:700;font-style:normal;">Продажи</div><div style="position:absolute;left:190px;top:215px;width:16px;height:15px;background:#f0f0f0;border:1px solid #d5d5d5;box-sizing:border-box;"></div><svg style="position:absolute;left:194px;top:221px;" width="8" height="4" viewBox="0 0 8 4"><path d="M0 0 H8 L4 4 Z" fill="#595959"/></svg><div class="t" style="left:108.5px;width:300px;text-align:center;top:215.10px;height:17px;line-height:17px;font-size:12.84px;color:#fff;font-weight:700;font-style:normal;">Процент</div><div class="t" style="left:-83.5px;width:300px;text-align:center;top:234.80px;height:16px;line-height:16px;font-size:12.42px;color:#222;font-weight:400;font-style:normal;">Товар А</div><div class="t" style="left:9px;width:300px;text-align:center;top:234.80px;height:16px;line-height:16px;font-size:12.40px;color:#222;font-weight:400;font-style:normal;">1500</div><div class="t" style="left:106.5px;width:300px;text-align:center;top:234.80px;height:16px;line-height:16px;font-size:12.40px;color:#222;font-weight:400;font-style:normal;">15%</div><div class="t" style="left:-83.5px;width:300px;text-align:center;top:253.80px;height:16px;line-height:16px;font-size:12.46px;color:#222;font-weight:400;font-style:normal;">Товар Б</div><div class="t" style="left:9px;width:300px;text-align:center;top:253.80px;height:16px;line-height:16px;font-size:12.40px;color:#222;font-weight:400;font-style:normal;">2300</div><div class="t" style="left:106.5px;width:300px;text-align:center;top:253.80px;height:16px;line-height:16px;font-size:12.40px;color:#222;font-weight:400;font-style:normal;">22%</div><div class="t" style="left:-83.5px;width:300px;text-align:center;top:272.80px;height:16px;line-height:16px;font-size:12.42px;color:#222;font-weight:400;font-style:normal;">Товар В</div><div class="t" style="left:9px;width:300px;text-align:center;top:272.80px;height:16px;line-height:16px;font-size:12.40px;color:#222;font-weight:400;font-style:normal;">890</div><div class="t" style="left:106.5px;width:300px;text-align:center;top:272.80px;height:16px;line-height:16px;font-size:12.40px;color:#222;font-weight:400;font-style:normal;">8%</div><div style="position:absolute;left:19px;top:271px;width:2px;height:18px;background:#217346;"></div><div style="position:absolute;left:0px;top:583px;width:832px;height:26px;background:#e6e6e6;"></div><div style="position:absolute;left:0px;top:609px;width:832px;height:1px;background:#d2d2d2;"></div><div style="position:absolute;left:0px;top:583px;width:91px;height:1px;background:#c0c0c0;"></div><div style="position:absolute;left:148px;top:583px;width:684px;height:1px;background:#c0c0c0;"></div><svg style="position:absolute;left:21px;top:591px;" width="5" height="8" viewBox="0 0 5 8"><path d="M4.5 0 V8 L0 4 Z" fill="#b9b9b9"/></svg><svg style="position:absolute;left:48px;top:591px;" width="5" height="8" viewBox="0 0 5 8"><path d="M0.5 0 V8 L5 4 Z" fill="#b9b9b9"/></svg><div style="position:absolute;left:91px;top:583px;width:57px;height:21px;background:#fff;"></div><div style="position:absolute;left:91px;top:583px;width:1px;height:23px;background:#c0c0c0;"></div><div style="position:absolute;left:147px;top:583px;width:1px;height:23px;background:#c0c0c0;"></div><div style="position:absolute;left:91px;top:604px;width:57px;height:2px;background:#217346;"></div><div class="t" style="left:-31px;width:300px;text-align:center;top:587.30px;height:15px;line-height:15px;font-size:11.30px;color:#217346;font-weight:700;font-style:normal;">Лист1</div><svg style="position:absolute;left:179px;top:588.5px;" width="15" height="15" viewBox="0 0 15 15"><circle cx="7.5" cy="7.5" r="7" fill="none" stroke="#666" stroke-width="1.1"/><path d="M7.5 4 V11 M4 7.5 H11" stroke="#666" stroke-width="1.3"/></svg><div style="position:absolute;left:498px;top:591px;width:2px;height:2px;background:#a8a8a8;"></div><div style="position:absolute;left:498px;top:595px;width:2px;height:2px;background:#a8a8a8;"></div><div style="position:absolute;left:498px;top:599px;width:2px;height:2px;background:#a8a8a8;"></div><div style="position:absolute;left:514px;top:589.5px;width:299px;height:13.5px;background:#dcdcdc;"></div><div style="position:absolute;left:514px;top:589.5px;width:15px;height:13.5px;background:#fff;border:1px solid #c6c6c6;box-sizing:border-box;"></div><svg style="position:absolute;left:518px;top:592.5px;" width="5" height="7" viewBox="0 0 5 7"><path d="M4.5 0 V7 L0.5 3.5 Z" fill="#555"/></svg><div style="position:absolute;left:527.5px;top:589.5px;width:244.5px;height:13.5px;background:#fff;border:1px solid #b8b8b8;box-sizing:border-box;"></div><div style="position:absolute;left:799px;top:589.5px;width:14px;height:13.5px;background:#fff;border:1px solid #c6c6c6;box-sizing:border-box;"></div><svg style="position:absolute;left:804px;top:592.5px;" width="5" height="7" viewBox="0 0 5 7"><path d="M0.5 0 V7 L4.5 3.5 Z" fill="#555"/></svg><div style="position:absolute;left:813px;top:195px;width:19px;height:388px;background:#e6e6e6;"></div><div style="position:absolute;left:816px;top:197px;width:14px;height:386px;background:#dcdcdc;"></div><div style="position:absolute;left:816px;top:197px;width:14px;height:14px;background:#fff;border:1px solid #c6c6c6;box-sizing:border-box;"></div><svg style="position:absolute;left:819px;top:202px;" width="8" height="4" viewBox="0 0 8 4"><path d="M0 4 H8 L4 0 Z" fill="#555"/></svg><div style="position:absolute;left:816px;top:210px;width:14px;height:341px;background:#fff;border:1px solid #c6c6c6;box-sizing:border-box;"></div><div style="position:absolute;left:816px;top:569px;width:14px;height:14px;background:#fff;border:1px solid #c6c6c6;box-sizing:border-box;"></div><svg style="position:absolute;left:819px;top:574px;" width="8" height="4" viewBox="0 0 8 4"><path d="M0 0 H8 L4 4 Z" fill="#555"/></svg><div style="position:absolute;left:0px;top:610px;width:832px;height:18px;background:#f3f2f1;"></div><div class="t" style="left:4px;top:612.50px;height:14px;line-height:14px;font-size:10.66px;color:#555;font-weight:400;font-style:normal;">Правка</div><svg style="position:absolute;left:58px;top:613px;" width="15" height="13" viewBox="0 0 15 13"><path d="M0.5 0.5 H13.5 V3 M0.5 0.5 V12.5 H6 M0.5 3.5 H13.5 M3 3.5 V12.5" fill="none" stroke="#555" stroke-width="1"/><circle cx="10" cy="8.5" r="3.6" fill="#f3f2f1" stroke="#555"/><circle cx="10" cy="8.5" r="1.7" fill="#555"/></svg><svg style="position:absolute;left:548px;top:613px;" width="13" height="13" viewBox="0 0 13 13"><path d="M0.5 0.5 H12.5 V12.5 H0.5 Z M0.5 4.5 H12.5 M0.5 8.5 H12.5 M4.5 0.5 V12.5 M8.5 0.5 V12.5" fill="none" stroke="#8f8f8f" stroke-width="1"/></svg><svg style="position:absolute;left:586px;top:613px;" width="13" height="13" viewBox="0 0 13 13"><rect x="0.5" y="0.5" width="12" height="12" fill="none" stroke="#8f8f8f"/><rect x="3.5" y="3.5" width="6" height="6" fill="#e0e0e0" stroke="#8f8f8f"/></svg><svg style="position:absolute;left:624px;top:613px;" width="13" height="13" viewBox="0 0 13 13"><rect x="0.5" y="0.5" width="12" height="12" fill="none" stroke="#8f8f8f"/><path d="M0.5 7.5 H7.5 V0.5 M4 0.5 V7.5" fill="none" stroke="#8f8f8f"/></svg><div style="position:absolute;left:655px;top:618.5px;width:7.5px;height:2px;background:#a8a8a8;"></div><div style="position:absolute;left:668px;top:618.5px;width:94px;height:2px;background:#c8c8c8;"></div><div style="position:absolute;left:715px;top:616px;width:1.5px;height:6px;background:#a8a8a8;"></div><svg style="position:absolute;left:766px;top:614px;" width="10" height="10" viewBox="0 0 10 10"><path d="M5 0.5 V9.5 M0.5 5 H9.5" stroke="#a8a8a8" stroke-width="1.6"/></svg><div class="t" style="left:786px;top:613.00px;height:13px;line-height:13px;font-size:10.22px;color:#a8a8a8;font-weight:400;font-style:normal;">100 %</div><div style="position:absolute;left:268px;top:164.5px;width:268px;height:230px;background:#fff;border:1px solid #d9d9d9;box-sizing:border-box;border-radius:4px;box-shadow:0 2px 6px rgba(0,0,0,0.18);"></div><svg style="position:absolute;left:0;top:0;" width="832" height="628" viewBox="0 0 832 628"><path d="M286.2 171.5 Q287.5 177 290.5 182.5 M291.6 171.5 Q290.3 177 287.2 182.5" fill="none" stroke="#555" stroke-width="1"/><circle cx="286" cy="184.3" r="2.2" fill="#3a96dd"/><circle cx="291.7" cy="184.3" r="2.2" fill="#3a96dd"/><circle cx="286" cy="184.3" r="0.6" fill="#fff"/><circle cx="291.7" cy="184.3" r="0.6" fill="#fff"/></svg><div class="t" style="left:305px;top:173.00px;height:14px;line-height:14px;font-size:10.79px;color:#222;font-weight:400;font-style:normal;">В<u>ы</u>резать</div><svg style="position:absolute;left:0;top:0;" width="832" height="628" viewBox="0 0 832 628"><path d="M287 210 H281.7 V198.3 H286.5 V200.5" fill="none" stroke="#505050" stroke-width="1.1"/><path d="M287.5 200.8 H292.5 L295.7 204 V212.2 H287.5 Z M292.5 200.8 V204 H295.7" fill="#fff" stroke="#505050" stroke-width="1.1"/><path d="M289.5 207.2 H293.2 M289.5 209.4 H293.2" stroke="#505050" stroke-width="0.9"/></svg><div class="t" style="left:305px;top:198.80px;height:15px;line-height:15px;font-size:11.33px;color:#222;font-weight:400;font-style:normal;"><u>К</u>опировать</div><svg style="position:absolute;left:0;top:0;" width="832" height="628" viewBox="0 0 832 628"><path d="M286 226.6 H283.6 V238.3 H289.5 M291.3 226.6 H293.4 V231" fill="none" stroke="#ee8a2a" stroke-width="1.3"/><path d="M285.6 229.3 V226.6 H287.2 L288.6 224.6 L290.1 226.6 H291.6 V229.3 Z" fill="#fff" stroke="#777" stroke-width="1"/><rect x="290.4" y="231.4" width="5.2" height="7" fill="#fff" stroke="#555" stroke-width="1.2"/></svg><div class="t" style="left:306px;top:227.80px;height:14px;line-height:14px;font-size:10.97px;color:#222;font-weight:700;font-style:normal;">Параметры вставки:</div><svg style="position:absolute;left:0;top:0;" width="832" height="628" viewBox="0 0 832 628"><path d="M310 254.6 H307.6 V271.8 H316 M319 254.6 H321.4 V260" fill="none" stroke="#ee8a2a" stroke-width="1.4"/><path d="M309.6 257.8 V254.6 H312 Q312.5 251.6 314.3 251.6 Q316.1 251.6 316.6 254.6 H319 V257.8 Z" fill="#fff" stroke="#777" stroke-width="1.1"/><rect x="316.6" y="262.1" width="8.8" height="10.7" fill="#fff" stroke="#555" stroke-width="1.3"/></svg><div style="position:absolute;left:268px;top:189px;width:265.5px;height:94px;border:4px solid #000;box-sizing:border-box;border-radius:10px;box-shadow:0 0 5px rgba(0,0,0,0.35), inset 0 0 5px rgba(0,0,0,0.3);"></div><svg style="position:absolute;left:281px;top:286px;" width="17" height="16" viewBox="0 0 17 16"><circle cx="10.5" cy="6" r="5" fill="none" stroke="#3a96d8" stroke-width="1.3"/><path d="M7 9.5 L1 15.5" stroke="#3a96d8" stroke-width="1.5"/><path d="M10.5 5 V8.5" stroke="#444" stroke-width="1.2"/><circle cx="10.5" cy="3.3" r="0.8" fill="#444"/></svg><div class="t" style="left:305px;top:287.50px;height:15px;line-height:15px;font-size:11.42px;color:#222;font-weight:400;font-style:normal;"><u>И</u>нтеллектуальный поиск</div><div style="position:absolute;left:300px;top:309px;width:233px;height:1px;background:#e1e1e1;"></div><svg style="position:absolute;left:283px;top:316px;" width="12" height="15" viewBox="0 0 12 15"><rect x="0.5" y="0.5" width="11" height="14" fill="none" stroke="#9a9a9a"/><path d="M3 5 H5 M7 5 H9 M3 9 H5 M7 9 H9" stroke="#9a9a9a" stroke-width="1.2"/></svg><div class="t" style="left:305px;top:318.40px;height:14px;line-height:14px;font-size:11.13px;color:#a6a6a6;font-weight:400;font-style:normal;">Формат <u>я</u>чеек...</div><div class="t" style="left:305px;top:344.00px;height:15px;line-height:15px;font-size:11.27px;color:#222;font-weight:400;font-style:normal;">Вы<u>б</u>рать из раскрывающегося списка...</div><div style="position:absolute;left:300px;top:365px;width:233px;height:1px;background:#e1e1e1;"></div><div class="t" style="left:305px;top:373.30px;height:15px;line-height:15px;font-size:11.22px;color:#222;font-weight:400;font-style:normal;"><u>Р</u>азвернуть строку формул</div></body></html>
